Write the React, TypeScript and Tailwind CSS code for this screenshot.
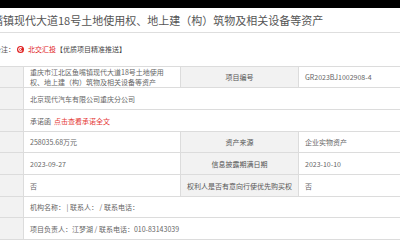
import React from 'react';

const font = { fontFamily: '"Noto Sans CJK SC", "Noto Sans", sans-serif' };

function Label({ children }: { children?: React.ReactNode }) {
  return (
    <div className="bg-[#f2f2f2] flex items-center justify-center text-[#555] whitespace-nowrap overflow-hidden">
      {children}
    </div>
  );
}

function Value({ children, span }: { children?: React.ReactNode; span?: boolean }) {
  return (
    <div
      className={`bg-white flex items-center pl-[6px] text-[#666] whitespace-nowrap ${
        span ? 'col-span-3' : ''
      }`}
    >
      {children}
    </div>
  );
}

function Logo() {
  return (
    <svg width="7" height="7" viewBox="0 0 10 10" className="shrink-0">
      <circle cx="5" cy="5" r="5" fill="#e02020" />
      <path d="M7 3.2A2.6 2.6 0 1 0 7.2 6.4" stroke="#fff" strokeWidth="1.5" fill="none" />
      <circle cx="5" cy="5" r="0.9" fill="#fff" />
    </svg>
  );
}

export default function App() {
  return (
    <div className="w-[400px] h-[250px] bg-black flex flex-col overflow-hidden" style={font}>
      <div className="h-[8px] shrink-0" />
      <div className="flex-1 bg-white flex flex-col overflow-hidden">
        {/* title, partly cut at the left edge */}
        <div className="h-[25px] flex items-center border-b border-[#dedede] overflow-hidden">
          <div className="ml-[-85px] whitespace-nowrap text-[11px] text-[#555] leading-none">
            重庆市江北区鱼嘴镇现代大道18号土地使用权、地上建（构）筑物及相关设备等资产
          </div>
        </div>

        <div className="h-[33px] flex items-center overflow-hidden text-[7px] leading-none">
          <div className="ml-[-6px] flex items-center whitespace-nowrap">
            <span className="text-[#555]">备注：</span>
            <span className="ml-[2px] mr-[4px]">
              <Logo />
            </span>
            <span className="text-[#e02020]">北交汇投</span>
            <span className="text-[#444]">【优质项目精准推送】</span>
          </div>
        </div>

        <div className="grid grid-cols-[23px_156px_117px_1fr] grid-rows-[20px_21px_21px_20px_21px_21px_20px_21px] gap-px bg-[#dcdcdc] border-y border-[#dcdcdc] text-[7px] leading-[10px] w-[420px]">
          <Label />
          <div className="bg-white flex items-center pl-[6px] pr-[12px] text-[#666]">
            重庆市江北区鱼嘴镇现代大道18号土地使用权、地上建（构）筑物及相关设备等资产
          </div>
          <Label>项目编号</Label>
          <Value>GR2023BJ1002908-4</Value>

          <Label />
          <Value span>北京现代汽车有限公司重庆分公司</Value>

          <Label />
          <Value span>
            承诺函<span className="ml-[3px] text-[#e53935]">点击查看承诺全文</span>
          </Value>

          <Label />
          <Value>258035.68万元</Value>
          <Label>资产来源</Label>
          <Value>企业实物资产</Value>

          <Label />
          <Value>2023-09-27</Value>
          <Label>信息披露期满日期</Label>
          <Value>2023-10-10</Value>

          <Label />
          <Value>否</Value>
          <Label>权利人是否有意向行使优先购买权</Label>
          <Value>否</Value>

          <Label />
          <Value span>机构名称： | 联系人： / 联系电话：</Value>

          <Label />
          <Value span>项目负责人：江梦湖 / 联系电话：010-83143039</Value>
        </div>
      </div>
    </div>
  );
}
